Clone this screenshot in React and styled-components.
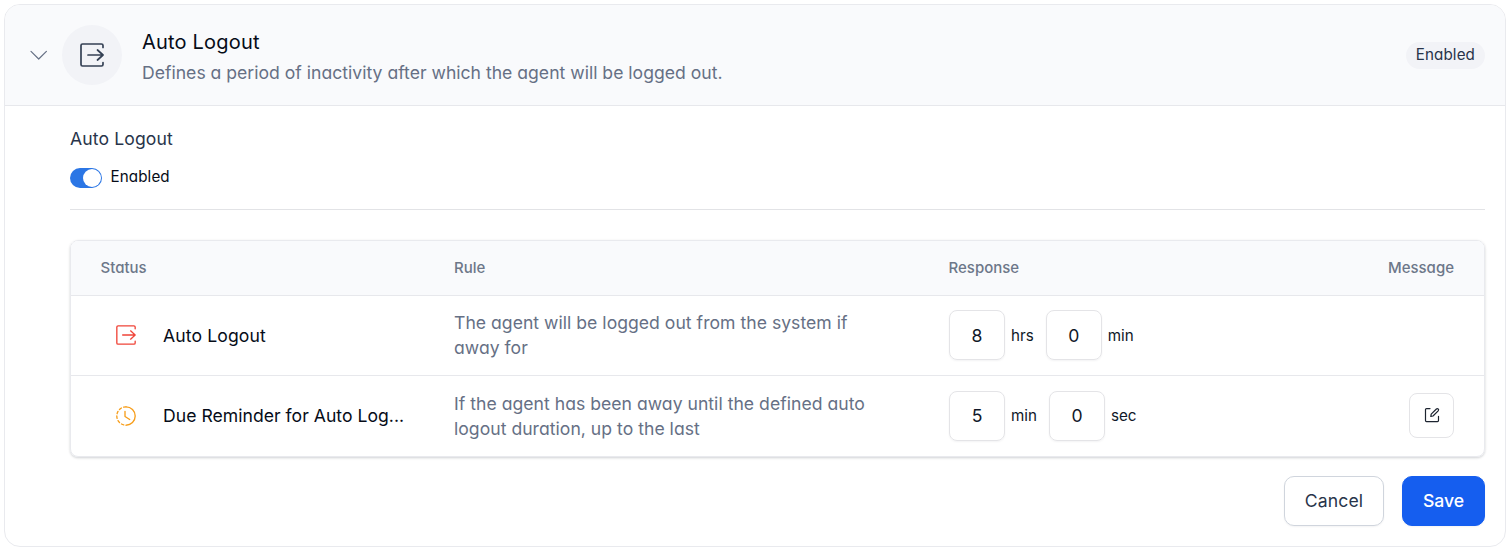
import React from "react";
import styled, { createGlobalStyle } from "styled-components";

const GlobalStyle = createGlobalStyle`
  *, *::before, *::after { box-sizing: border-box; }
  body {
    margin: 0;
    background: #fff;
    font-family: Inter, "Liberation Sans", sans-serif;
    font-feature-settings: "cv11" 1;
    color: #101828;
  }
`;

const Card = styled.section`
  width: 1502px;
  height: 543px;
  margin: 4px 0 0 4px;
  border: 1px solid #e9eaee;
  border-radius: 16px;
  overflow: hidden;
  background: #fff;
`;

const Header = styled.header`
  display: flex;
  align-items: center;
  height: 101px;
  padding: 0 20px 0 25px;
  border-bottom: 1px solid #e7e8ec;
  background: #f9fafc;
`;

const IconCircle = styled.div`
  display: flex;
  align-items: center;
  justify-content: center;
  width: 60px;
  height: 60px;
  margin: 0 20px 0 14px;
  border-radius: 50%;
  background: #f2f3f7;
`;

const Heading = styled.div`
  flex: 1;
  padding-top: 3px;
`;

const Title = styled.h2`
  margin: 0;
  font-size: 20px;
  line-height: 30px;
  font-weight: 400;
  letter-spacing: 0.2px;
  color: #060c18;
`;

const Description = styled.p`
  margin: 2px 0 0;
  font-size: 17.6px;
  line-height: 28px;
  color: #667085;
`;

const Badge = styled.span`
  display: flex;
  align-items: center;
  height: 27px;
  padding: 0 10px 2px;
  border-radius: 14px;
  background: #f2f3f7;
  font-size: 15.2px;
  font-weight: 400;
  letter-spacing: 0.1px;
  color: #28344a;
`;

const Body = styled.div`
  padding: 19px 20px 0 65px;
`;

const SectionTitle = styled.h3`
  margin: 0;
  font-size: 17.6px;
  line-height: 28px;
  font-weight: 400;
  letter-spacing: 0.12px;
  color: #28344a;
`;

const ToggleRow = styled.label`
  display: flex;
  align-items: center;
  gap: 8.5px;
  height: 22px;
  margin-top: 13px;
  font-size: 15.2px;
  font-weight: 400;
  letter-spacing: 0.1px;
  color: #060c18;
`;

const ToggleText = styled.span`
  padding-bottom: 2px;
`;

const Switch = styled.span`
  display: flex;
  align-items: center;
  justify-content: flex-end;
  width: 32px;
  height: 20px;
  margin-top: 1px;
  padding: 1px;
  border-radius: 10px;
  background: #2b76e5;
`;

const Knob = styled.span`
  width: 18px;
  height: 18px;
  border-radius: 50%;
  background: #fff;
`;

const Divider = styled.hr`
  height: 1px;
  margin: 21px 0 30px;
  border: 0;
  background: #e2e3e6;
`;

const Table = styled.div`
  border: 1px solid #e9eaee;
  border-radius: 8px;
  overflow: hidden;
  box-shadow: 0 1px 3px rgba(16, 24, 40, 0.12), 0 1px 2px rgba(16, 24, 40, 0.08);
`;

const Row = styled.div`
  display: grid;
  grid-template-columns: 353.5px 494.5px 1fr auto;
  align-items: center;
  height: 80px;
  padding: 0 30px ${(p) => (p.$last ? 0 : 1)}px 29.5px;
  border-bottom: ${(p) => (p.$last ? "0" : "1px solid #e7e8ec")};
`;

const HeadRow = styled(Row)`
  height: 55px;
  padding-bottom: 2px;
  background: #f9fafc;
  font-size: 15px;
  font-weight: 500;
  color: #6d7789;
`;

const StatusCell = styled.div`
  display: flex;
  align-items: center;
  gap: 27.5px;
  padding: 0 0 ${(p) => (p.$raised ? 1 : 0)}px 15px;
  font-size: 17.6px;
  font-weight: 400;
  letter-spacing: ${(p) => (p.$raised ? 0.02 : 0.12)}px;
  color: #060c18;
`;

const RuleCell = styled.div`
  width: 440px;
  padding-bottom: 1px;
  font-size: 17.6px;
  line-height: 25px;
  letter-spacing: 0.02px;
  color: #667085;
`;

const ResponseCell = styled.div`
  display: flex;
  align-items: center;
  padding-left: 0.5px;
`;

const NumberBox = styled.span`
  display: flex;
  align-items: center;
  justify-content: center;
  width: 56px;
  height: 50px;
  padding-bottom: ${(p) => (p.$raised ? 1 : 0)}px;
  border: 1px solid #e4e4e7;
  border-radius: 8px;
  box-shadow: 0 1px 2px rgba(16, 24, 40, 0.05);
  font-size: 17.6px;
`;

const Unit = styled.span`
  margin: 0 12px 0 6px;
  padding-bottom: ${(p) => (p.$raised ? 2 : 0)}px;
  font-size: 15.2px;
`;

const EditButton = styled.button`
  display: flex;
  align-items: center;
  justify-content: center;
  width: 45px;
  height: 45px;
  margin-bottom: 1px;
  padding: 0 0 1px;
  border: 1px solid #e4e4e7;
  border-radius: 8px;
  background: #fff;
`;

const Actions = styled.footer`
  display: flex;
  justify-content: flex-end;
  gap: 18px;
  margin-top: 19px;
`;

const Button = styled.button`
  width: ${(p) => (p.$primary ? 83 : 100)}px;
  height: 50px;
  padding: 0 0 1px;
  border: 1px solid ${(p) => (p.$primary ? "#155eef" : "#d0d5dd")};
  border-radius: 10px;
  background: ${(p) => (p.$primary ? "#155eef" : "#fff")};
  box-shadow: 0 1px 2px rgba(16, 24, 40, 0.05);
  font-family: Inter, "Liberation Sans", sans-serif;
  font-feature-settings: normal;
  font-size: 17.6px;
  font-weight: ${(p) => (p.$primary ? 500 : 400)};
  letter-spacing: ${(p) => (p.$primary ? 0 : 0.15)}px;
  color: ${(p) => (p.$primary ? "#fff" : "#28344a")};
`;

const LogoutIcon = ({ size, color, stroke }) => (
  <svg width={size} height={size} viewBox="0 0 24 24" fill="none" stroke={color} strokeWidth={stroke} strokeLinecap="round" strokeLinejoin="round">
    <path d="M23 4.5V2.5A1.5 1.5 0 0 0 21.5 1H2.5A1.5 1.5 0 0 0 1 2.500v19A1.5 1.5 0 0 0 2.5 23h19a1.5 1.5 0 0 0 1.5-1.5v-2" />
    <path d="M8 12h15M17.5 7l5.5 5-5.5 5" />
  </svg>
);

const ClockIcon = () => (
  <svg width="20" height="20" viewBox="0 0 20 20" fill="none" stroke="#f79e1b" strokeWidth="1.35" strokeLinecap="round" strokeLinejoin="round">
    <path d="M10 .8a9.2 9.2 0 0 1 0 18.4" />
    <path d="M10 .8a9.2 9.2 0 0 0 0 18.4" strokeDasharray="2.4 2.4" />
    <path d="M9 5.3v5.2l4.7 3" />
  </svg>
);

const ChevronIcon = () => (
  <svg width="18" height="10" viewBox="0 0 18 10" fill="none" stroke="#667085" strokeWidth="1.2" strokeLinecap="round" strokeLinejoin="round">
    <path d="m1 1.4 7.7 7.6L16.4 1.4" />
  </svg>
);

const EditIcon = () => (
  <svg width="16" height="16" viewBox="0 0 16 16" fill="none" stroke="#1d2430" strokeWidth="1.2" strokeLinejoin="round" strokeLinecap="round">
    <path d="M6 1.6H2.5a1 1 0 0 0-1 1v11a1 1 0 0 0 1 1h11a1 1 0 0 0 1-1V9.3" />
    <path d="m7.2 7.2 5.2-5.2a1.2 1.2 0 0 1 1.8 1.8L9 9l-2.2.5z" />
  </svg>
);

export default function App() {
  return (
    <>
      <GlobalStyle />
      <Card>
        <Header>
          <ChevronIcon />
          <IconCircle><LogoutIcon size={24} color="#344054" stroke={1.7} /></IconCircle>
          <Heading>
            <Title>Auto Logout</Title>
            <Description>Defines a period of inactivity after which the agent will be logged out.</Description>
          </Heading>
          <Badge>Enabled</Badge>
        </Header>
        <Body>
          <SectionTitle>Auto Logout</SectionTitle>
          <ToggleRow><Switch><Knob /></Switch><ToggleText>Enabled</ToggleText></ToggleRow>
          <Divider />
          <Table>
            <HeadRow>
              <span>Status</span><span>Rule</span><span>Response</span><span>Message</span>
            </HeadRow>
            <Row>
              <StatusCell><LogoutIcon size={20} color="#f04438" stroke={1.6} />Auto Logout</StatusCell>
              <RuleCell>The agent will be logged out from the system if<br />away for</RuleCell>
              <ResponseCell>
                <NumberBox>8</NumberBox><Unit>hrs</Unit>
                <NumberBox>0</NumberBox><Unit>min</Unit>
              </ResponseCell>
            </Row>
            <Row $last>
              <StatusCell $raised><ClockIcon />Due Reminder for Auto Log...</StatusCell>
              <RuleCell>If the agent has been away until the defined auto<br />logout duration, up to the last</RuleCell>
              <ResponseCell>
                <NumberBox $raised>5</NumberBox><Unit $raised>min</Unit>
                <NumberBox $raised>0</NumberBox><Unit $raised>sec</Unit>
              </ResponseCell>
              <EditButton aria-label="Edit message"><EditIcon /></EditButton>
            </Row>
          </Table>
          <Actions>
            <Button>Cancel</Button>
            <Button $primary>Save</Button>
          </Actions>
        </Body>
      </Card>
    </>
  );
}
